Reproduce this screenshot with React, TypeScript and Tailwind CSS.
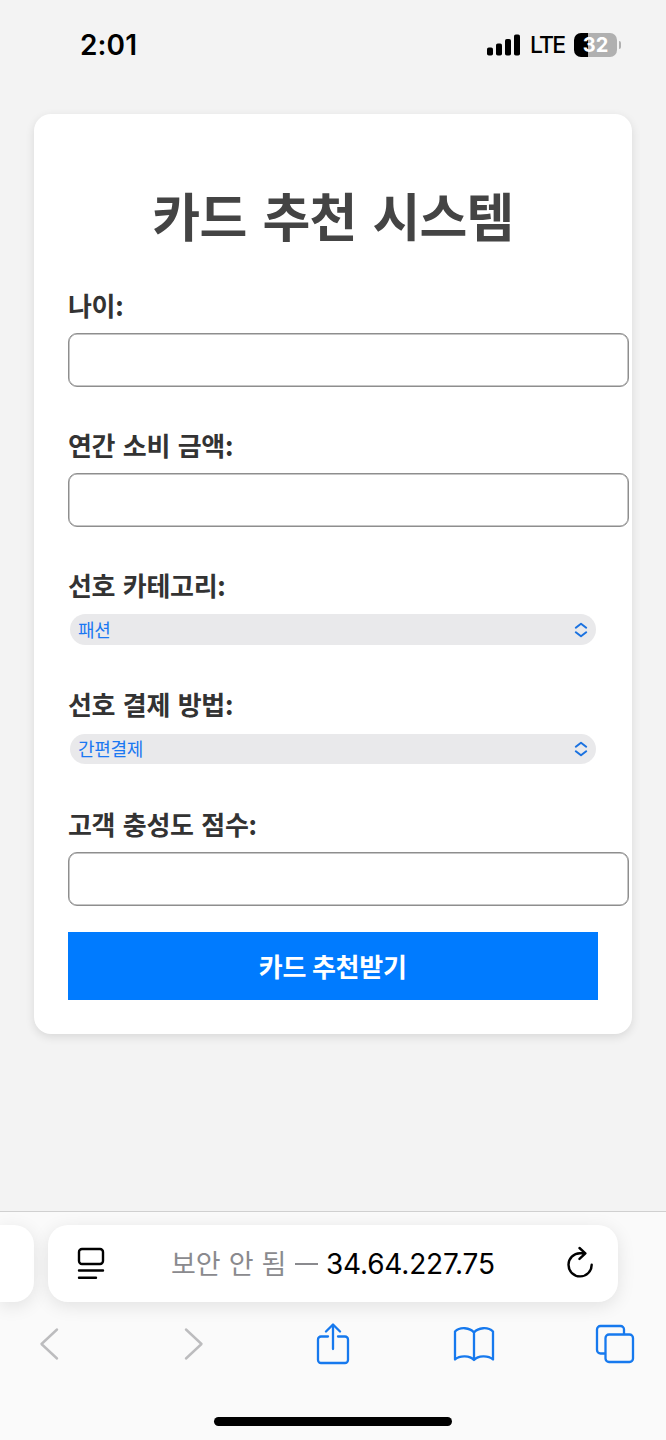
import type { ReactNode } from "react";

const kr = "font-['Noto_Sans_CJK_KR',sans-serif]";

function StatusBar() {
  return (
    <header className="flex h-[114px] items-start justify-between pt-[30px] pr-[45px] pl-[80px]">
      <span className="font-['Inter',sans-serif] text-[28px] leading-[30px] font-semibold tracking-[0.1px] text-black">2:01</span>
      <div className="flex h-[30px] items-center">
        <svg width="34" height="22" viewBox="0 0 34 22" className="mt-[-1px]">
          <rect x="0" y="13.500" width="6" height="8" rx="1.800" />
          <rect x="9" y="9.500" width="6" height="12" rx="1.800" />
          <rect x="18" y="5" width="6" height="16.500" rx="1.800" />
          <rect x="27" y="0.500" width="6" height="21" rx="1.800" />
        </svg>
        <span className="ml-[9px] w-[36px] font-['Inter',sans-serif] text-[23px] font-medium tracking-[-1.800px] whitespace-nowrap text-black">LTE</span>
        <div className="ml-[8px] flex h-[24px] w-[43px] items-center justify-center rounded-[7px] bg-[linear-gradient(90deg,#000_32%,#b0b0b0_32%)]">
          <span className="font-['Inter',sans-serif] text-[20px] leading-[24px] font-bold text-white">32</span>
        </div>
        <div className="ml-[1.500px] h-[8px] w-[2.500px] rounded-r-full bg-[#b0b0b0]" />
      </div>
    </header>
  );
}

function Field({ label, className, children }: { label: string; className: string; children: ReactNode }) {
  return (
    <div className={className}>
      <label className={`${kr} block h-[30px] text-[26px] leading-[28px] font-bold tracking-[-0.3px] whitespace-nowrap text-[#333] [word-spacing:2px]`}>
        {label}
      </label>
      {children}
    </div>
  );
}

function TextInput() {
  return <input className="mt-[12px] block h-[54px] w-[561px] rounded-[9px] border border-[#8e8e8e] bg-white px-3 shadow-[inset_0_0_0_0.5px_#8e8e8e] outline-none" />;
}

function SelectBox({ value, className }: { value: string; className: string }) {
  return (
    <button className={`flex w-[526px] items-center justify-between rounded-full bg-[#e9e9eb] pr-[8px] pl-[8px] ${className}`}>
      <span className={`${kr} h-[30px] text-[18px] leading-[28px] tracking-[-0.3px] text-[#1b78f2]`}>{value}</span>
      <svg width="14" height="16" viewBox="0 0 14 16" fill="none" stroke="#1b72e0" strokeWidth="2" strokeLinecap="round" strokeLinejoin="round">
        <path d="M1.800 5.700 7 1.700l5.200 4M1.800 10.300l5.200 4 5.200-4" />
      </svg>
    </button>
  );
}

function RecommendCard() {
  return (
    <main className="mx-[34px] h-[920px] w-[598px] rounded-[17px] bg-white px-[34px] pt-[76px] shadow-[0_3px_10px_rgba(0,0,0,0.11)]">
      <h1 className={`${kr} h-[52px] text-center text-[52px] leading-[50px] font-bold tracking-[-0.8px] whitespace-nowrap text-[#444] [word-spacing:5px]`}>카드 추천 시스템</h1>
      <Field label="나이:" className="mt-[49px]"><TextInput /></Field>
      <Field label="연간 소비 금액:" className="mt-[44px]"><TextInput /></Field>
      <Field label="선호 카테고리:" className="mt-[44px]"><SelectBox value="패션" className="mt-[13px] ml-[2px] h-[31px]" /></Field>
      <Field label="선호 결제 방법:" className="mt-[45px]"><SelectBox value="간편결제" className="mt-[14px] ml-[2px] h-[30px]" /></Field>
      <Field label="고객 충성도 점수:" className="mt-[46px]"><TextInput /></Field>
      <button className={`${kr} mt-[26px] flex h-[68px] w-[529.500px] items-center justify-center bg-[#007bff] pb-px text-[26px] font-bold tracking-[-0.200px] whitespace-nowrap text-white`}>카드 추천받기</button>
    </main>
  );
}

function AddressBar() {
  return (
    <div className="flex gap-[14px] overflow-x-clip pt-[13px]">
      <div className="h-[77px] w-[34px] rounded-r-[20px] bg-white shadow-[0_4px_18px_rgba(0,0,0,0.1)]" />
      <div className="flex h-[77px] w-[570px] items-center rounded-[20px] bg-white shadow-[0_4px_18px_rgba(0,0,0,0.1)]">
        <svg width="28" height="34" viewBox="0 0 28 34" fill="none" stroke="#000" strokeWidth="2.400" strokeLinecap="round" className="ml-[29px]">
          <rect x="2" y="2" width="24" height="15" rx="3" />
          <path d="M2 23.500h24M2 30.700h17" />
        </svg>
        <div className="ml-[66px] flex w-[330px] items-center whitespace-nowrap">
          <span className={`${kr} mt-[-2px] w-[114px] text-[27px] leading-[36px] font-normal text-[#8a8a8e] [word-spacing:2px]`}>보안 안 됨</span>
          <span className="ml-[10px] h-[2px] w-[23px] bg-[#8a8a8e]" />
          <span className="ml-[8px] font-['Inter',sans-serif] text-[28px] leading-[36px] tracking-[-0.200px] text-black">34.64.227.75</span>
        </div>
        <svg width="28" height="32" viewBox="0 0 28 32" fill="none" stroke="#000" strokeWidth="2.400" strokeLinecap="round" strokeLinejoin="round" className="mt-[-4px] ml-[65px]">
          <path d="M18.700 7.200H14A11.600 11.600 0 1 0 25.700 18.800M13.500 2l5.900 5.300-5.900 5.600" />
        </svg>
      </div>
    </div>
  );
}

function Toolbar() {
  return (
    <nav className="flex h-[84px] items-center pl-[39px]">
      <svg width="20" height="34" viewBox="0 0 20 34" fill="none" stroke="#bcbcbe" strokeWidth="2.400" strokeLinecap="round" strokeLinejoin="round">
        <path d="M18 2.500 2.500 17 18 31.500" />
      </svg>
      <svg width="20" height="34" viewBox="0 0 20 34" fill="none" stroke="#bcbcbe" strokeWidth="2.400" strokeLinecap="round" strokeLinejoin="round" className="ml-[125px]">
        <path d="m2 2.500 15.500 14.500L2 31.500" />
      </svg>
      <svg width="34" height="42" viewBox="0 0 34 42" fill="none" stroke="#1679ee" strokeWidth="2.300" strokeLinecap="round" strokeLinejoin="round" className="ml-[112px]">
        <path d="M12 13.500H5a3 3 0 0 0-3 3V37a3 3 0 0 0 3 3h24a3 3 0 0 0 3-3V16.500a3 3 0 0 0-3-3h-7M17 26V2M10 8.500l7-7 7 7" />
      </svg>
      <svg width="42" height="36" viewBox="0 0 42 36" fill="none" stroke="#1679ee" strokeWidth="2.300" strokeLinecap="round" strokeLinejoin="round" className="ml-[103px]">
        <path d="M21 6.500C17 1.500 7 .500 2 5.500v28c5-4.500 15-4 19 .500 4-4.500 14-5 19-.500v-28C35 .500 25 1.500 21 6.500V34" />
      </svg>
      <svg width="40" height="40" viewBox="0 0 40 40" fill="none" stroke="#1679ee" strokeWidth="2.300" strokeLinecap="round" strokeLinejoin="round" className="ml-[100px]">
        <path d="M10 29.500H5.500a3.500 3.500 0 0 1-3.500-3.500V5.500A3.500 3.500 0 0 1 5.500 2h20A3.500 3.500 0 0 1 29 5.500V10" />
        <rect x="10.500" y="10.500" width="27.500" height="27.500" rx="3.500" />
      </svg>
    </nav>
  );
}

export default function App() {
  return (
    <div className="flex h-[1440px] w-[666px] flex-col overflow-hidden bg-[#f3f3f3]">
      <StatusBar />
      <RecommendCard />
      <footer className="mt-[177px] h-[229px] border-t border-[#d0d0d0] bg-[#fafafa]">
        <AddressBar />
        <Toolbar />
        <div className="mx-auto mt-[31px] h-[9px] w-[238px] rounded-full bg-black" />
      </footer>
    </div>
  );
}
